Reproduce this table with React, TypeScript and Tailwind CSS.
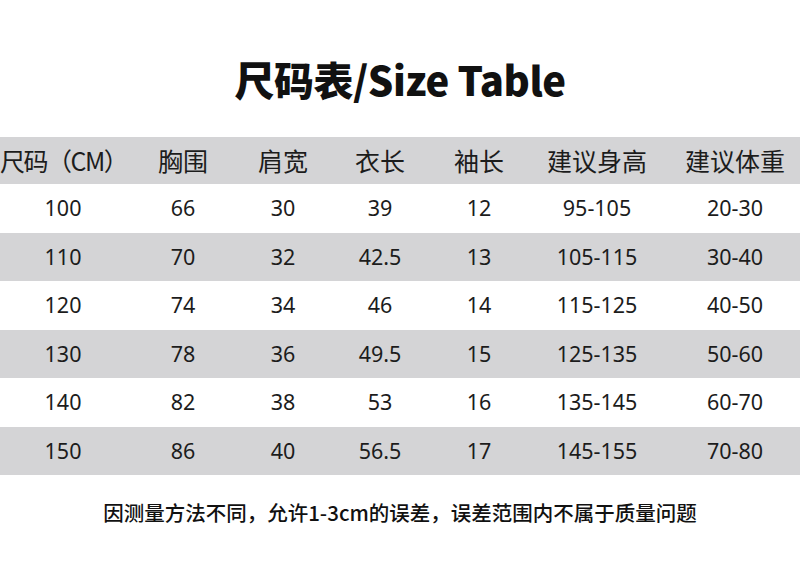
const cols = ["w-[126px]", "w-[114px]", "w-[86px]", "w-[108px]", "w-[90px]", "w-[146px]", "w-[130px]"];

const header = ["尺码（CM）", "胸围", "肩宽", "衣长", "袖长", "建议身高", "建议体重"];

const rows = [
  ["100", "66", "30", "39", "12", "95-105", "20-30"],
  ["110", "70", "32", "42.5", "13", "105-115", "30-40"],
  ["120", "74", "34", "46", "14", "115-125", "40-50"],
  ["130", "78", "36", "49.5", "15", "125-135", "50-60"],
  ["140", "82", "38", "53", "16", "135-145", "60-70"],
  ["150", "86", "40", "56.5", "17", "145-155", "70-80"],
];

export default function App() {
  return (
    <div className="w-[800px] h-[563px] bg-white text-[#1c1c1c] flex flex-col overflow-hidden">
      <h1 className="mt-[55px] h-[48px] flex items-center justify-center text-[40px] font-black tracking-[-0.5px] text-[#111] font-['Noto_Sans_CJK_SC',sans-serif]">
        尺码表/Size Table
      </h1>

      <div className="mt-[34px] flex flex-col">
        <div className="flex h-[47px] items-center bg-[#d4d4d6] text-[25px] font-['Noto_Sans_CJK_SC',sans-serif]">
          {header.map((h, i) => (
            <div key={i} className={`${cols[i]} text-center whitespace-nowrap ${i === 0 ? "text-left tracking-[-1.5px]" : ""}`}>
              {h}
            </div>
          ))}
        </div>
        {rows.map((r, ri) => (
          <div
            key={ri}
            className={`flex h-[48.5px] items-center text-[21.5px] font-['Noto_Sans','Noto_Sans_CJK_SC',sans-serif] ${ri % 2 === 1 ? "bg-[#d4d4d6]" : "bg-white"}`}
          >
            {r.map((c, ci) => (
              <div key={ci} className={`${cols[ci]} text-center`}>
                {c}
              </div>
            ))}
          </div>
        ))}
      </div>

      <p className="mt-[22px] text-center text-[20.5px] font-medium text-[#111] font-['Noto_Sans_CJK_SC',sans-serif]">
        因测量方法不同，允许1-3cm的误差，误差范围内不属于质量问题
      </p>
    </div>
  );
}
